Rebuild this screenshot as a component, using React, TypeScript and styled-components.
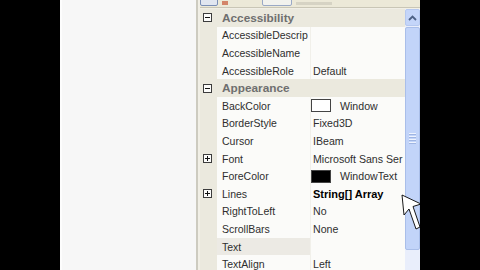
import React from 'react';
import styled, { createGlobalStyle } from 'styled-components';

type Prop = {
  kind: 'cat' | 'prop';
  name: string;
  value?: string;
  expand?: boolean;
  swatch?: string;
  bold?: boolean;
  selected?: boolean;
};

const rows: Prop[] = [
  { kind: 'cat', name: 'Accessibility' },
  { kind: 'prop', name: 'AccessibleDescrip' },
  { kind: 'prop', name: 'AccessibleName' },
  { kind: 'prop', name: 'AccessibleRole', value: 'Default' },
  { kind: 'cat', name: 'Appearance' },
  { kind: 'prop', name: 'BackColor', value: 'Window', swatch: '#ffffff' },
  { kind: 'prop', name: 'BorderStyle', value: 'Fixed3D' },
  { kind: 'prop', name: 'Cursor', value: 'IBeam' },
  { kind: 'prop', name: 'Font', value: 'Microsoft Sans Ser', expand: true },
  { kind: 'prop', name: 'ForeColor', value: 'WindowText', swatch: '#000000' },
  { kind: 'prop', name: 'Lines', value: 'String[] Array', expand: true, bold: true },
  { kind: 'prop', name: 'RightToLeft', value: 'No' },
  { kind: 'prop', name: 'ScrollBars', value: 'None' },
  { kind: 'prop', name: 'Text', selected: true },
  { kind: 'prop', name: 'TextAlign', value: 'Left' },
];

const ExpandBox: React.FC<{ open: boolean }> = ({ open }) => (
  <svg width="9" height="9" viewBox="0 0 9 9">
    <rect x="0.5" y="0.5" width="8" height="8" fill="#fbfbf9" stroke="#3c3c3c" />
    <line x1="2" y1="4.5" x2="7" y2="4.5" stroke="#111" />
    {!open && <line x1="4.5" y1="2" x2="4.5" y2="7" stroke="#111" />}
  </svg>
);

const App: React.FC = () => {
  return (
    <>
      <GlobalStyle />
      <Page>
        <BlackStrip $width={60} />
        <FormPane />
        <Panel>
          <Toolbar>
            <ToolButton $active $width={18} />
            <ToolIcon />
            <ToolSpacer />
            <ToolButton $width={30} />
            <ToolFaint />
          </Toolbar>
          <GridArea>
            <Grid>
              {rows.map((r) =>
                r.kind === 'cat' ? (
                  <CatRow key={r.name}>
                    <Margin>
                      <ExpandBox open />
                    </Margin>
                    <CatTitle>{r.name}</CatTitle>
                  </CatRow>
                ) : (
                  <PropRow key={r.name}>
                    <Margin>{r.expand && <ExpandBox open={false} />}</Margin>
                    <NameCell $selected={r.selected}>{r.name}</NameCell>
                    <ValueCell $bold={r.bold}>
                      {r.swatch && <Swatch $color={r.swatch} />}
                      {r.value}
                    </ValueCell>
                  </PropRow>
                )
              )}
            </Grid>
            <Scrollbar>
              <UpButton>
                <svg width="9" height="6" viewBox="0 0 9 6">
                  <path d="M1 5 L4.5 1.5 L8 5" fill="none" stroke="#4d6185" strokeWidth="1.8" />
                </svg>
              </UpButton>
              <Track>
                <Thumb>
                  <Grip />
                  <Grip />
                  <Grip />
                  <Grip />
                </Thumb>
              </Track>
            </Scrollbar>
            <Cursor width="24" height="40" viewBox="0 0 24 40">
              <polygon
                points="1,1 20,10 12,12.5 19,33 15,35 8,15 3,21"
                fill="#ffffff"
                stroke="#000"
                strokeWidth="0.9"
              />
            </Cursor>
          </GridArea>
        </Panel>
        <BlackStrip $width={60} />
      </Page>
    </>
  );
};

export default App;

const GlobalStyle = createGlobalStyle`
  html, body {
    margin: 0;
    padding: 0;
    background: #000;
  }
  body {
    font-family: "Liberation Sans", Arial, sans-serif;
  }
`;

const Page = styled.div`
  display: flex;
  width: 480px;
  height: 270px;
  overflow: hidden;
  background: #000;
`;

const BlackStrip = styled.div<{ $width: number }>`
  width: ${(p) => p.$width}px;
  flex-shrink: 0;
  background: #000;
`;

const FormPane = styled.div`
  width: 134px;
  flex-shrink: 0;
  background: #f7f7f7;
  border-left: 2px solid #fdfdfd;
  border-right: 2px solid #cdcbc0;
`;

const Panel = styled.div`
  width: 222px;
  flex-shrink: 0;
  display: flex;
  flex-direction: column;
  background: #f1efe6;
  padding-left: 2px;
  box-sizing: border-box;
`;

const Toolbar = styled.div`
  height: 7px;
  display: flex;
  align-items: flex-end;
  gap: 4px;
  background: #ece9d8;
  border-bottom: 1px solid #c9c6b6;
  margin-bottom: 1px;
  overflow: hidden;
`;

const ToolButton = styled.div<{ $active?: boolean; $width: number }>`
  width: ${(p) => p.$width}px;
  height: 9px;
  margin-bottom: 1px;
  box-sizing: border-box;
  border: 1px solid ${(p) => (p.$active ? '#7b8fb6' : '#9aa9c6')};
  border-radius: 2px;
  background: ${(p) => (p.$active ? '#e1e6f0' : '#f2f2ee')};
`;

const ToolIcon = styled.div`
  width: 6px;
  height: 4px;
  margin-bottom: 2px;
  background: #c95a3a;
  opacity: 0.7;
`;

const ToolSpacer = styled.div`
  width: 26px;
`;

const ToolFaint = styled.div`
  width: 36px;
  height: 3px;
  margin-bottom: 2px;
  background: #d6d3c4;
`;

const GridArea = styled.div`
  position: relative;
  flex: 1;
  display: flex;
  overflow: hidden;
`;

const Grid = styled.div`
  flex: 1;
  display: flex;
  flex-direction: column;
  background: #fbfbf9;
`;

const rowBase = `
  display: grid;
  grid-template-columns: 17px 94px 1fr;
  height: 17.6px;
  flex-shrink: 0;
  align-items: center;
  box-sizing: border-box;
`;

const CatRow = styled.div`
  ${rowBase}
  background: #ebe9de;
`;

const PropRow = styled.div`
  ${rowBase}
`;

const Margin = styled.div`
  height: 100%;
  background: #ebe9de;
  display: flex;
  align-items: center;
  padding-left: 3px;
`;

const CatTitle = styled.span`
  grid-column: 2 / 4;
  padding-left: 5px;
  font-size: 11.8px;
  font-weight: 700;
  color: #6f6f6f;
  white-space: nowrap;
`;

const NameCell = styled.div<{ $selected?: boolean }>`
  height: 100%;
  display: flex;
  align-items: center;
  padding-left: 5px;
  font-size: 10.5px;
  color: #2e2e2e;
  white-space: nowrap;
  overflow: hidden;
  background: ${(p) => (p.$selected ? '#eceae4' : 'transparent')};
  border-right: 1px solid #f1f0ea;
`;

const ValueCell = styled.div<{ $bold?: boolean }>`
  height: 100%;
  display: flex;
  align-items: center;
  gap: 9px;
  padding-left: 2px;
  font-size: ${(p) => (p.$bold ? '11px' : '10.6px')};
  font-weight: ${(p) => (p.$bold ? 700 : 400)};
  color: ${(p) => (p.$bold ? '#000' : '#2e2e2e')};
  white-space: nowrap;
  overflow: hidden;
`;

const Swatch = styled.span<{ $color: string }>`
  width: 20px;
  height: 13px;
  flex-shrink: 0;
  box-sizing: border-box;
  background: ${(p) => p.$color};
  border: 1px solid #444;
  margin-left: -2px;
`;

const Scrollbar = styled.div`
  width: 15px;
  flex-shrink: 0;
  display: flex;
  flex-direction: column;
  background: #e9eefb;
`;

const UpButton = styled.div`
  height: 17px;
  box-sizing: border-box;
  display: flex;
  align-items: center;
  justify-content: center;
  background: #c4d5f9;
  border: 1px solid #b5c8ef;
  border-radius: 2px;
`;

const Track = styled.div`
  flex: 1;
  display: flex;
  flex-direction: column;
  padding-top: 1px;
`;

const Thumb = styled.div`
  height: 223px;
  box-sizing: border-box;
  display: flex;
  flex-direction: column;
  justify-content: center;
  gap: 1px;
  padding: 0 3px;
  background: #c2d4f9;
  border: 1px solid #a9bee9;
  border-radius: 2px;
`;

const Grip = styled.div`
  height: 1px;
  background: #eef3fe;
  border-bottom: 1px solid #9fb5e2;
`;

const Cursor = styled.svg`
  position: absolute;
  left: 201px;
  top: 185px;
  pointer-events: none;
`;
